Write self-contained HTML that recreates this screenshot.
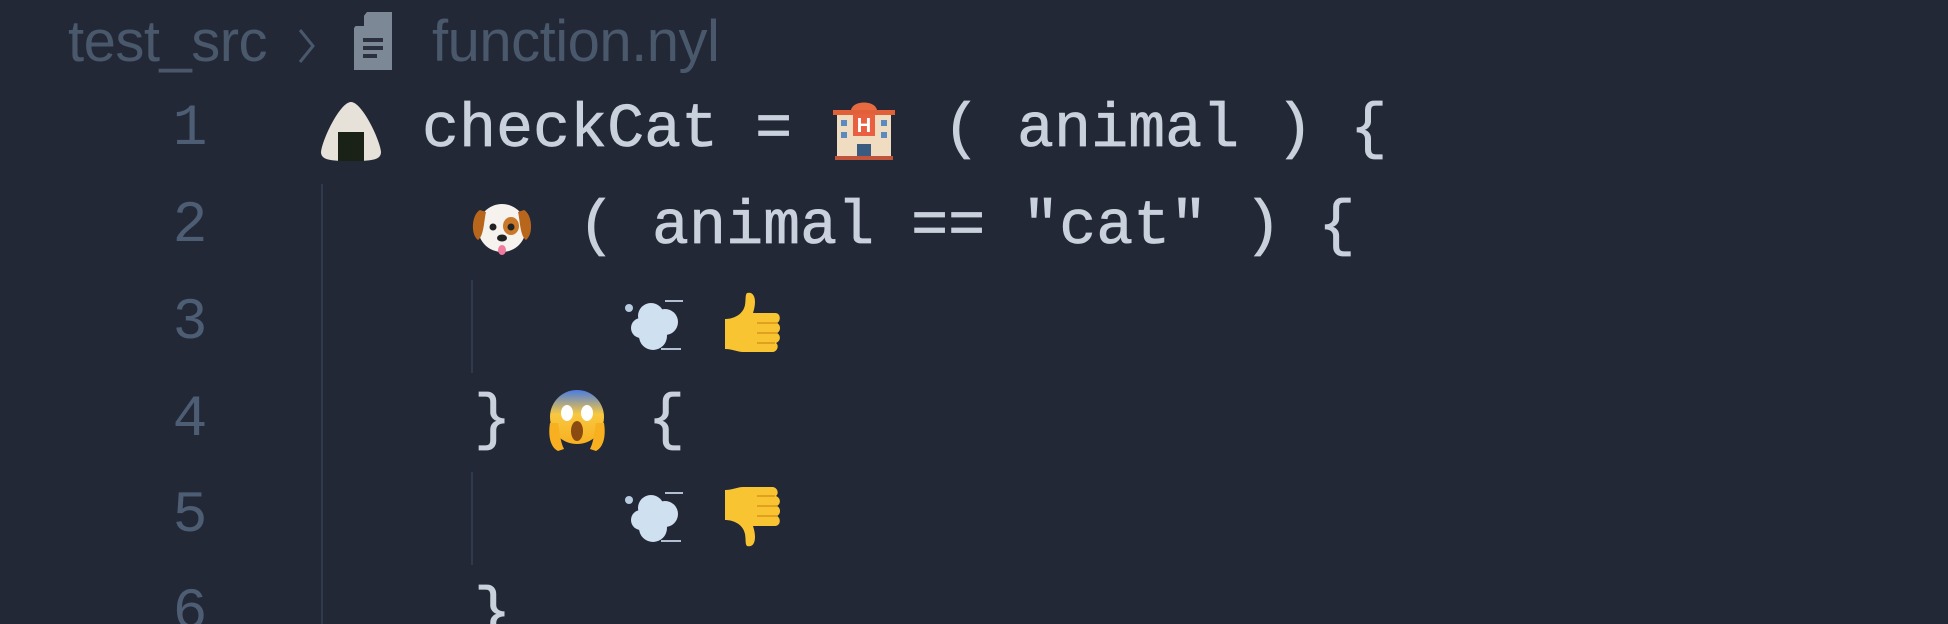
<!DOCTYPE html>
<html><head><meta charset="utf-8"><style>
html,body{margin:0;padding:0;background:#232837}
#w{width:1948px;height:624px;background:#232837;position:relative;overflow:hidden;font-family:"Liberation Mono",monospace}
.t{position:absolute;font-size:61.7px;line-height:96px;color:#c9d1dd;white-space:pre;-webkit-text-stroke:0.7px #c9d1dd}
.n{position:absolute;font-size:58px;line-height:96px;color:#4d5d73;width:80px;text-align:center;left:150px}
.bc{position:absolute;top:8px;font-family:"Liberation Sans",sans-serif;font-size:58px;color:#4a586c;white-space:pre;letter-spacing:-0.5px}
.g{position:absolute;width:2px;background:#2f3b4d}
svg{position:absolute}
</style></head><body><div id="w">
<div class="bc" style="left:68px">test_src</div>
<svg style="left:296px;top:26px" width="22" height="40" viewBox="0 0 22 40"><path d="M4 4 L17 20 L4 36" fill="none" stroke="#4a586c" stroke-width="3"/></svg>
<svg style="left:354px;top:12px" width="38" height="58" viewBox="0 0 38 58"><path d="M13 0 H38 V58 H0 V16 Z" fill="#7d8896"/><path d="M10 2 V14 H0" fill="#232837"/><rect x="9" y="26" width="20" height="4" fill="#2a303d"/><rect x="9" y="34" width="20" height="4" fill="#2a303d"/><rect x="9" y="42" width="14" height="4" fill="#2a303d"/></svg>
<div class="bc" style="left:432px">function.nyl</div>

<div class="n" style="top:82px">1</div>
<div class="n" style="top:179px">2</div>
<div class="n" style="top:276px">3</div>
<div class="n" style="top:373px">4</div>
<div class="n" style="top:469px">5</div>
<div class="n" style="top:566px">6</div>

<div class="g" style="left:321px;top:184px;height:440px"></div>
<div class="g" style="left:471px;top:280px;height:93px"></div>
<div class="g" style="left:471px;top:472px;height:93px"></div>

<svg style="left:318px;top:100px" width="66" height="62" viewBox="0 0 66 62"><path d="M33 2 C22 2 4 40 3 52 C3 60 12 61 33 61 C54 61 63 60 63 52 C62 40 44 2 33 2Z" fill="#e6e2da"/><rect x="20" y="32" width="26" height="29" fill="#1a2218"/></svg>
<div class="t" style="left:422px;top:82px">checkCat =</div>
<svg style="left:833px;top:98px" width="62" height="64" viewBox="0 0 62 64"><rect x="4" y="12" width="54" height="50" fill="#f0dcc0"/><path d="M18 12 C20 2 42 2 44 12Z" fill="#e86a40"/><rect x="0" y="12" width="62" height="5" fill="#e06038"/><rect x="20" y="16" width="22" height="22" fill="#e86040"/><text x="31" y="34" font-family="Liberation Sans" font-size="20" font-weight="bold" fill="#fff" text-anchor="middle">H</text><rect x="8" y="22" width="6" height="6" fill="#5a8ac0"/><rect x="48" y="22" width="6" height="6" fill="#5a8ac0"/><rect x="8" y="34" width="6" height="6" fill="#5a8ac0"/><rect x="48" y="34" width="6" height="6" fill="#5a8ac0"/><rect x="24" y="46" width="14" height="16" fill="#3a5a80"/><rect x="2" y="58" width="58" height="4" fill="#c0543a"/></svg>
<div class="t" style="left:943px;top:82px">( animal ) {</div>

<svg style="left:470px;top:196px" width="64" height="64" viewBox="0 0 64 64"><circle cx="32" cy="32" r="24" fill="#f6f3ee"/><path d="M10 14 C2 18 0 38 8 44 C14 40 14 24 16 16Z" fill="#b8661c"/><path d="M54 14 C62 18 64 38 56 44 C50 40 50 24 48 16Z" fill="#b8661c"/><ellipse cx="41" cy="30" rx="8" ry="9" fill="#c87828"/><circle cx="23" cy="31" r="3.5" fill="#222"/><circle cx="41" cy="31" r="3.5" fill="#222"/><ellipse cx="32" cy="42" rx="5" ry="3.5" fill="#222"/><ellipse cx="32" cy="54" rx="4" ry="5" fill="#f07aa0"/></svg>
<div class="t" style="left:578px;top:179px">( animal == "cat" ) {</div>

<svg style="left:621px;top:292px" width="64" height="64" viewBox="0 0 64 64"><g fill="#cfe0f0"><circle cx="30" cy="24" r="13"/><circle cx="44" cy="30" r="13"/><circle cx="32" cy="44" r="14"/><circle cx="20" cy="36" r="10"/></g><circle cx="8" cy="16" r="4" fill="#b8cce0"/><rect x="44" y="8" width="18" height="2" fill="#b0c0d0"/><rect x="40" y="56" width="20" height="2" fill="#b0c0d0"/></svg>
<svg style="left:721px;top:291px" width="64" height="64" viewBox="0 0 64 64"><path d="M26 2 C34 0 36 10 32 22 L54 22 C60 22 60 30 56 32 C60 34 60 40 56 42 C60 44 60 50 55 52 C58 54 57 60 52 61 L22 61 C16 61 12 58 4 58 L4 28 C12 28 22 24 24 14 C25 8 24 4 26 2Z" fill="#f8c432"/><path d="M36 32 H56 M36 42 H56 M36 52 H54" stroke="#e0a020" stroke-width="2"/></svg>

<div class="t" style="left:474px;top:373px">}</div>
<svg style="left:546px;top:389px" width="62" height="64" viewBox="0 0 62 64"><defs><linearGradient id="sg" x1="0" y1="0" x2="0" y2="1"><stop offset="0" stop-color="#4a7ce0"/><stop offset="0.45" stop-color="#f8c840"/><stop offset="1" stop-color="#f8b020"/></linearGradient></defs><ellipse cx="31" cy="28" rx="27" ry="27" fill="url(#sg)"/><ellipse cx="21" cy="24" rx="6" ry="8" fill="#fff"/><ellipse cx="41" cy="24" rx="6" ry="8" fill="#fff"/><ellipse cx="31" cy="42" rx="6" ry="10" fill="#8a4a10"/><path d="M4 34 C2 46 4 58 12 62 L18 60 C14 52 14 44 12 34Z" fill="#f8b020"/><path d="M58 34 C60 46 58 58 50 62 L44 60 C48 52 48 44 50 34Z" fill="#f8b020"/></svg>
<div class="t" style="left:648px;top:373px">{</div>

<svg style="left:621px;top:484px" width="64" height="64" viewBox="0 0 64 64"><g fill="#cfe0f0"><circle cx="30" cy="24" r="13"/><circle cx="44" cy="30" r="13"/><circle cx="32" cy="44" r="14"/><circle cx="20" cy="36" r="10"/></g><circle cx="8" cy="16" r="4" fill="#b8cce0"/><rect x="44" y="8" width="18" height="2" fill="#b0c0d0"/><rect x="40" y="56" width="20" height="2" fill="#b0c0d0"/></svg>
<svg style="left:721px;top:484px" width="64" height="64" viewBox="0 0 64 64"><g transform="translate(0,64) scale(1,-1)"><path d="M26 2 C34 0 36 10 32 22 L54 22 C60 22 60 30 56 32 C60 34 60 40 56 42 C60 44 60 50 55 52 C58 54 57 60 52 61 L22 61 C16 61 12 58 4 58 L4 28 C12 28 22 24 24 14 C25 8 24 4 26 2Z" fill="#f8c432"/><path d="M36 32 H56 M36 42 H56 M36 52 H54" stroke="#e0a020" stroke-width="2"/></g></svg>

<div class="t" style="left:474px;top:566px">}</div>
</div></body></html>
